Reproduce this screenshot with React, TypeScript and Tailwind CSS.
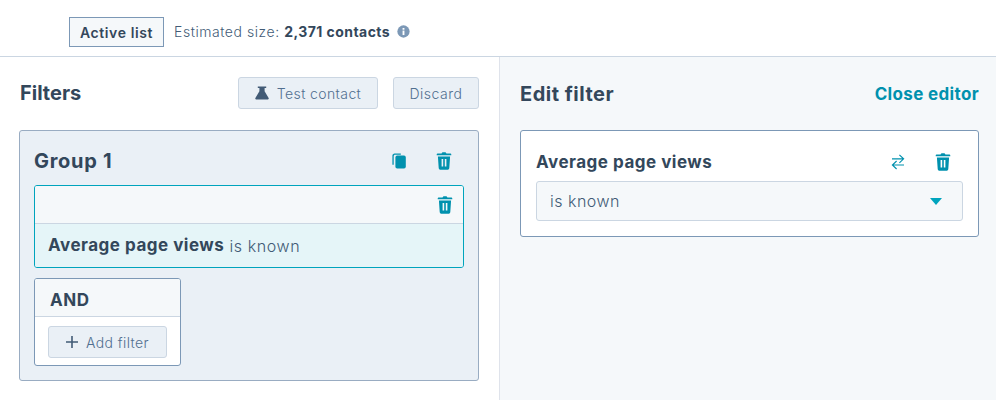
const font = "font-['Inter','Noto_Sans',sans-serif]";

function Trash({ className = "" }: { className?: string }) {
  return (
    <svg viewBox="0 0 16 18" width="16" height="18" className={className} fill="#0091ae">
      <path d="M5.6 1.6C5.8.7 6.5.2 7.3.2h1.4c.8 0 1.5.5 1.7 1.4h4c.5 0 .9.4.9.8v.9H.7v-.9c0-.4.4-.8.9-.8h4z" />
      <path fillRule="evenodd" d="M1.9 4.4h12.2l-.8 11.5c-.1 1-.9 1.8-1.9 1.8H4.6c-1 0-1.8-.8-1.9-1.8L1.9 4.4zM5.6 7v7.6h1.6V7H5.6zm3.2 0v7.6h1.6V7H8.8z" />
    </svg>
  );
}

function Clone() {
  return (
    <svg viewBox="0 0 14 16" width="14" height="16" fill="#0091ae">
      <rect x="3.4" y="2.6" width="10.4" height="13" rx="1.8" />
      <path d="M2.6 0.4h6.2v1.3H3.2c-.9 0-1.5.6-1.5 1.5v8.6H.4V2.6C.4 1.4 1.4.4 2.6.4z" />
    </svg>
  );
}

function Swap() {
  return (
    <svg viewBox="0 0 14 16" width="14" height="16" fill="none" stroke="#0091ae" strokeWidth="1.15">
      <path d="M1 4.8h11.6M8.4 .8l4.2 4-4.2 4" />
      <path d="M13 11H1.4M5.6 7 1.4 11l4.2 4" />
    </svg>
  );
}

function Flask() {
  return (
    <svg viewBox="0 0 14 14" width="14" height="14" fill="#425b76">
      <path d="M2.8.6h8.4v1.5H9.6v3.1l4 6.7c.4.7 0 1.5-.8 1.5H1.2c-.8 0-1.2-.8-.8-1.5l4-6.7V2.1H2.8V.6z" />
    </svg>
  );
}

function Info() {
  return (
    <svg viewBox="0 0 14 14" width="13" height="13">
      <circle cx="7" cy="7" r="6.6" fill="#7c98b6" />
      <rect x="6" y="6" width="2" height="4.8" fill="#fff" />
      <rect x="6" y="3.2" width="2" height="1.9" fill="#fff" />
    </svg>
  );
}

export default function App() {
  return (
    <div className={`${font} w-[996px] h-[400px] overflow-hidden bg-white text-[#33475b] flex flex-col`}>
      <header className="h-[57px] shrink-0 border-b border-[#cbd6e2] pl-[69px] pt-[17px] flex items-start gap-[10px]">
        <span className="h-[30px] w-[95px] flex items-center justify-center border border-[#7c98b6] bg-[#f5f8fa] text-[14px] font-semibold tracking-[0.6px]">
          Active list
        </span>
        <div className="h-[28px] flex items-center text-[14px] text-[#425b76]">
          <span className="tracking-[0.55px] font-light">Estimated size:&nbsp;</span>
          <strong className="font-bold text-[#33475b] tracking-[0.45px]">2,371 contacts</strong>
          <span className="ml-[7px] flex"><Info /></span>
        </div>
      </header>

      <div className="flex flex-1 min-h-0">
        <section className="w-[500px] shrink-0 border-r border-[#dfe3eb] pl-[19px] pr-[20px] pt-[19px]">
          <div className="flex items-center h-[34px]">
            <h2 className="text-[20px] font-bold pl-px">Filters</h2>
            <button className="ml-auto h-[32px] w-[140px] flex items-center justify-center gap-[8px] rounded-[3px] border border-[#cbd6e2] bg-[#eaf0f6] text-[14px] font-light tracking-[0.4px] text-[#516f90]">
              <Flask />
              Test contact
            </button>
            <button className="ml-[15px] h-[32px] w-[86px] rounded-[3px] border border-[#cbd6e2] bg-[#eaf0f6] text-[14px] font-light tracking-[0.5px] text-[#516f90]">
              Discard
            </button>
          </div>

          <div className="mt-[20px] h-[251px] rounded-[3px] border border-[#99acc2] bg-[#eaf0f6] px-[14px]">
            <div className="h-[54px] flex items-center">
              <h3 className="text-[20px] font-bold tracking-[0.7px] mt-[6px]">Group 1</h3>
              <span className="ml-auto mt-[6px] flex"><Clone /></span>
              <span className="ml-[30px] mr-[12px] mt-[6px] flex"><Trash /></span>
            </div>
            <div className="h-[83px] rounded-[3px] border border-[#00a4bd] overflow-hidden">
              <div className="h-[38px] bg-[#f5f8fa] border-b border-[#cbd6e2] flex items-center justify-end pr-[10px]">
                <Trash />
              </div>
              <div className="h-[43px] bg-[#e5f5f8] flex items-center pl-[13px] text-[16px]">
                <span className="text-[17px] font-bold tracking-[0.5px]">Average page views</span>
                <span className="text-[#425b76] font-light tracking-[0.6px]">&nbsp;is known</span>
              </div>
            </div>
            <div className="mt-[10px] w-[147px] h-[88px] rounded-[3px] border border-[#7c98b6] bg-white overflow-hidden">
              <div className="h-[38px] bg-[#f5f8fa] border-b border-[#cbd6e2] flex items-center pl-[15px] pt-[6px] text-[17px] font-bold tracking-[0.6px]">
                AND
              </div>
              <div className="pl-[13px] pt-[9px]">
                <button className="h-[32px] w-[119px] flex items-center justify-center gap-[8px] rounded-[3px] border border-[#cbd6e2] bg-[#eaf0f6] text-[14px] font-light tracking-[0.4px] text-[#516f90]">
                  <svg viewBox="0 0 12 12" width="12" height="12" stroke="#425b76" strokeWidth="1.6">
                    <path d="M6 0v12M0 6h12" />
                  </svg>
                  Add filter
                </button>
              </div>
            </div>
          </div>
        </section>

        <section className="flex-1 bg-[#f5f8fa] pl-[20px] pr-[17px] pt-[20px]">
          <div className="flex items-center justify-between h-[33px]">
            <h2 className="text-[20px] font-bold tracking-[0.5px]">Edit filter</h2>
            <a className="text-[17px] font-bold text-[#0091ae] tracking-[0.35px] mt-[2px]">Close editor</a>
          </div>
          <div className="mt-[20px] h-[107px] rounded-[3px] border border-[#7c98b6] bg-white px-[15px] pt-[15px]">
            <div className="flex items-center h-[32px]">
              <span className="text-[17px] font-bold tracking-[0.5px] mt-[1px]">Average page views</span>
              <span className="ml-auto flex"><Swap /></span>
              <span className="ml-[30px] mr-[12px] flex"><Trash /></span>
            </div>
            <div className="mt-[3px] h-[40px] rounded-[3px] border border-[#cbd6e2] bg-[#f5f8fa] flex items-center pl-[13px] pr-[20px] text-[16px] font-light tracking-[0.5px] text-[#425b76]">
              is known
              <svg viewBox="0 0 12 7" width="12" height="7" fill="#00a4bd" className="ml-auto">
                <path d="M0 0h12L6 7z" />
              </svg>
            </div>
          </div>
        </section>
      </div>
    </div>
  );
}
